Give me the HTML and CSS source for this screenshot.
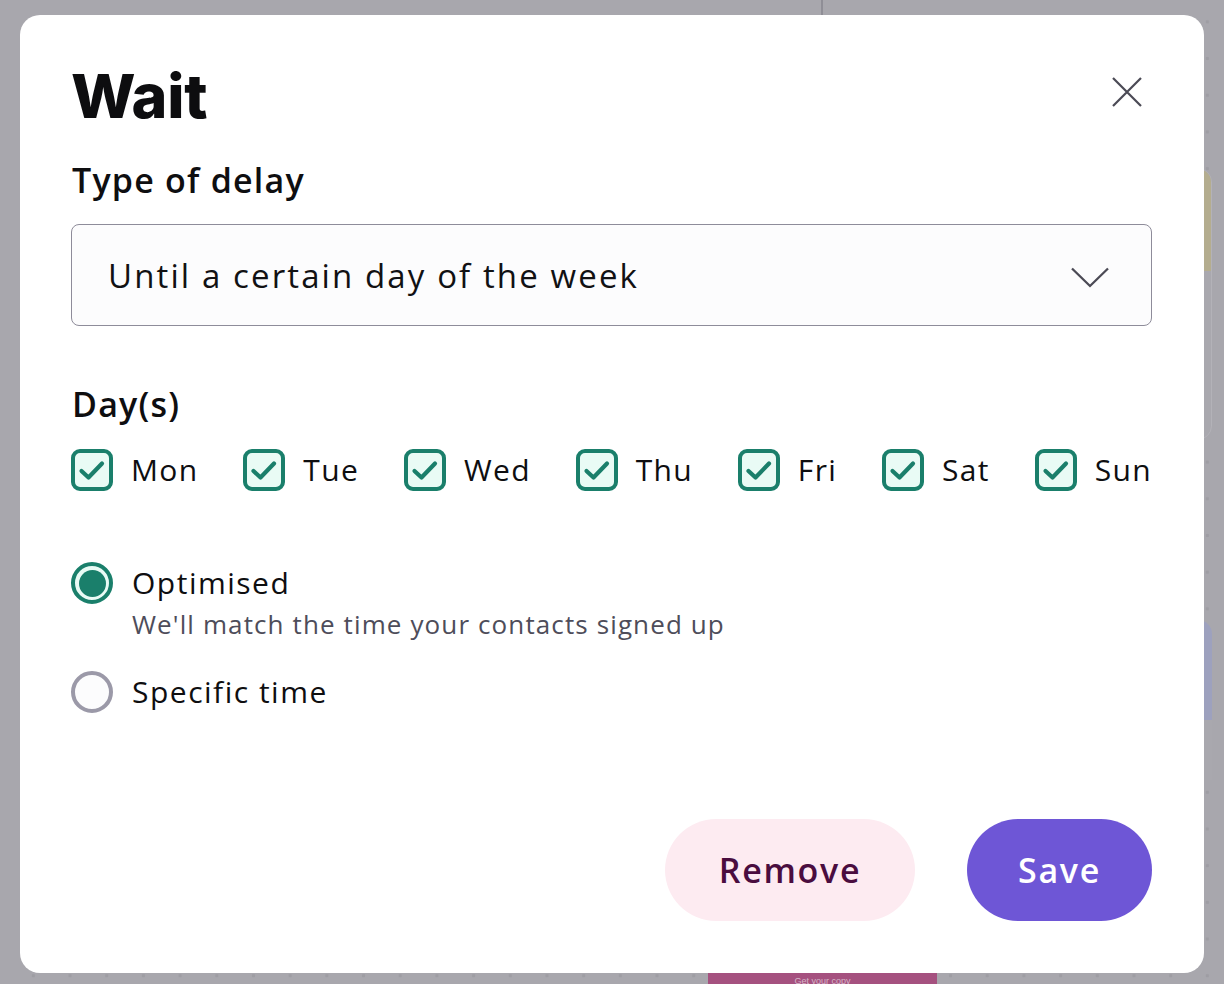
FILE: index.html
```html
<!DOCTYPE html>
<html lang="en">
<head>
<meta charset="utf-8">
<title>Wait</title>
<link rel="stylesheet" href="styles.css">
</head>
<body>
<div class="backdrop">
  <div class="bd-line"></div>
  <div class="bd-card"><div class="bd-card-top"></div></div>
  <div class="bd-blue"></div>
  <div class="bd-cta">Get your copy</div>
</div>

<div class="modal" role="dialog" aria-labelledby="modal-title">
  <div class="modal-header">
    <h1 class="modal-title" id="modal-title">Wait</h1>
    <button class="close-btn" aria-label="Close">
      <svg width="30" height="30" viewBox="0 0 30 30"><path d="M1 1 L29 29 M29 1 L1 29" stroke="#4b4a55" stroke-width="2.2" fill="none"/></svg>
    </button>
  </div>

  <div class="field-label label-delay">Type of delay</div>
  <div class="select">
    <span class="select-value">Until a certain day of the week</span>
    <svg class="chevron" width="38" height="21" viewBox="0 0 38 21"><polyline points="1,1.5 19,19 37,1.5" stroke="#4b4a55" stroke-width="2.3" fill="none"/></svg>
  </div>

  <div class="field-label label-days">Day(s)</div>
  <div class="days">
    <label class="day"><span class="checkbox"><svg width="34" height="34" viewBox="0 0 34 34"><polyline points="6.5,18 13.5,24.5 27,10.5" stroke="#1a7f6b" stroke-width="4.2" stroke-linecap="round" stroke-linejoin="round" fill="none"/></svg></span><span class="day-name">Mon</span></label>
    <label class="day"><span class="checkbox"><svg width="34" height="34" viewBox="0 0 34 34"><polyline points="6.5,18 13.5,24.5 27,10.5" stroke="#1a7f6b" stroke-width="4.2" stroke-linecap="round" stroke-linejoin="round" fill="none"/></svg></span><span class="day-name">Tue</span></label>
    <label class="day"><span class="checkbox"><svg width="34" height="34" viewBox="0 0 34 34"><polyline points="6.5,18 13.5,24.5 27,10.5" stroke="#1a7f6b" stroke-width="4.2" stroke-linecap="round" stroke-linejoin="round" fill="none"/></svg></span><span class="day-name">Wed</span></label>
    <label class="day"><span class="checkbox"><svg width="34" height="34" viewBox="0 0 34 34"><polyline points="6.5,18 13.5,24.5 27,10.5" stroke="#1a7f6b" stroke-width="4.2" stroke-linecap="round" stroke-linejoin="round" fill="none"/></svg></span><span class="day-name">Thu</span></label>
    <label class="day"><span class="checkbox"><svg width="34" height="34" viewBox="0 0 34 34"><polyline points="6.5,18 13.5,24.5 27,10.5" stroke="#1a7f6b" stroke-width="4.2" stroke-linecap="round" stroke-linejoin="round" fill="none"/></svg></span><span class="day-name">Fri</span></label>
    <label class="day"><span class="checkbox"><svg width="34" height="34" viewBox="0 0 34 34"><polyline points="6.5,18 13.5,24.5 27,10.5" stroke="#1a7f6b" stroke-width="4.2" stroke-linecap="round" stroke-linejoin="round" fill="none"/></svg></span><span class="day-name">Sat</span></label>
    <label class="day"><span class="checkbox"><svg width="34" height="34" viewBox="0 0 34 34"><polyline points="6.5,18 13.5,24.5 27,10.5" stroke="#1a7f6b" stroke-width="4.2" stroke-linecap="round" stroke-linejoin="round" fill="none"/></svg></span><span class="day-name">Sun</span></label>
  </div>

  <div class="radio-group">
    <label class="radio-row radio-optimised">
      <span class="radio radio-on"><span class="radio-dot"></span></span>
      <span class="radio-text">
        <span class="radio-label">Optimised</span>
        <span class="radio-desc">We'll match the time your contacts signed up</span>
      </span>
    </label>
    <label class="radio-row radio-specific">
      <span class="radio radio-off"></span>
      <span class="radio-text">
        <span class="radio-label">Specific time</span>
      </span>
    </label>
  </div>

  <div class="modal-footer">
    <button class="btn btn-remove">Remove</button>
    <button class="btn btn-save">Save</button>
  </div>
</div>
</body>
</html>
```

FILE: styles.css
```css
* { box-sizing: border-box; }

html, body {
  margin: 0;
  padding: 0;
}

body {
  width: 1224px;
  height: 984px;
  overflow: hidden;
  position: relative;
  background-color: #a8a7ad;
  background-image: radial-gradient(circle, #9e9da3 1.6px, transparent 2px);
  background-size: 36.7px 36.7px;
  background-position: 15px 3.5px;
  font-family: "Open Sans", "Noto Sans", sans-serif;
  color: #0e0e10;
  padding: 15px 20px 0 20px;
}

/* backdrop decorations (behind the overlay) */
.backdrop { position: absolute; inset: 0; }
.bd-line {
  position: absolute; left: 821px; top: 0; width: 2px; height: 20px;
  background: #8f8e96;
}
.bd-card {
  position: absolute; left: 1160px; top: 168px; width: 52px; height: 272px;
  border-radius: 14px; background: #a9a8ae; border: 1px solid #b3b2b8;
  overflow: hidden;
}
.bd-card-top { height: 102px; background: #b4ad8f; }
.bd-blue {
  position: absolute; left: 1160px; top: 620px; width: 52px; height: 160px;
  border-radius: 14px 14px 0 0; background: linear-gradient(#9da1be 0, #9da1be 100px, #a9a8ae 100px);
}
.bd-cta {
  position: absolute; left: 708px; top: 968px; width: 229px; height: 24px;
  background: #a5517f; color: #d6b6c8; font-family: "Liberation Sans", sans-serif;
  font-size: 9px; text-align: center; padding-top: 8px;
}

/* modal */
.modal {
  position: relative;
  width: 1184px;
  height: 958px;
  background: #ffffff;
  border-radius: 20px;
  padding: 51px 52px 52px 51px;
  display: flex;
  flex-direction: column;
}

.modal-header {
  display: flex;
  justify-content: space-between;
  align-items: flex-start;
  height: 60px;
}

.modal-title {
  margin: 0;
  font-family: Inter, "Liberation Sans", sans-serif;
  font-weight: 800;
  font-size: 61px;
  line-height: 60px;
  letter-spacing: -0.3px;
  color: #0d0d0f;
}

.close-btn {
  width: 50px;
  height: 50px;
  margin-top: 1px;
  border: none;
  background: transparent;
  padding: 0;
  display: flex;
  align-items: center;
  justify-content: center;
  cursor: pointer;
}

.field-label {
  font-size: 34px;
  font-weight: 600;
  line-height: 40px;
  letter-spacing: 0.036em;
  padding-left: 1px;
}
.label-delay { margin-top: 34px; }
.label-days { margin-top: 58px; }

.select {
  margin-top: 24px;
  height: 102px;
  border: 1px solid #8e8c9a;
  border-radius: 8px;
  background: #fcfcfd;
  display: flex;
  align-items: center;
  justify-content: space-between;
  padding: 0 42px 0 36px;
}
.select-value {
  font-size: 33px;
  letter-spacing: 0.064em;
  color: #111113;
}
.chevron { margin-top: 4px; }

.days {
  margin-top: 25px;
  display: flex;
  justify-content: space-between;
  align-items: center;
}
.day {
  display: flex;
  align-items: center;
  gap: 18px;
}
.checkbox {
  width: 42px;
  height: 42px;
  border: 4px solid #1a7f6b;
  border-radius: 9px;
  background: #e9fbf5;
  display: flex;
  align-items: center;
  justify-content: center;
}
.day-name {
  font-size: 30px;
  line-height: 42px;
  letter-spacing: 0.045em;
}

.radio-group {
  margin-top: 71px;
  display: flex;
  flex-direction: column;
  gap: 27px;
}
.radio-row {
  display: flex;
  align-items: flex-start;
  gap: 19px;
}
.radio {
  flex: none;
  width: 42px;
  height: 42px;
  border-radius: 50%;
  border: 4px solid #1a7f6b;
  display: flex;
  align-items: center;
  justify-content: center;
}
.radio-on { background: #e9fbf5; }
.radio-dot {
  width: 27px;
  height: 27px;
  border-radius: 50%;
  background: #1a7f6b;
}
.radio-off {
  border-color: #9b99a8;
  background: #fcfcfd;
}
.radio-text {
  display: flex;
  flex-direction: column;
}
.radio-label {
  font-size: 30px;
  line-height: 42px;
  letter-spacing: 0.05em;
}
.radio-desc {
  font-size: 26px;
  line-height: 40px;
  letter-spacing: 0.043em;
  color: #4e4d5a;
}

.modal-footer {
  margin-top: auto;
  display: flex;
  justify-content: flex-end;
  gap: 52px;
}
.btn {
  height: 102px;
  border: none;
  border-radius: 51px;
  font-family: "Open Sans", "Noto Sans", sans-serif;
  font-size: 34px;
  font-weight: 600;
  letter-spacing: 0.05em;
  cursor: pointer;
}
.btn-remove {
  width: 250px;
  background: #fdebf1;
  color: #4a0d3f;
}
.btn-save {
  width: 185px;
  background: #6e56d6;
  color: #ffffff;
}
```
